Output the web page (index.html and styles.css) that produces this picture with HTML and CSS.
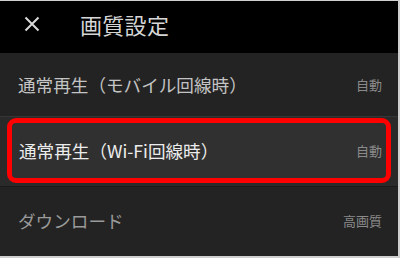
FILE: index.html
```html
<!DOCTYPE html>
<html lang="ja">
<head>
<meta charset="utf-8">
<link rel="stylesheet" href="styles.css">
</head>
<body>
<div class="app">
  <header class="header">
    <svg class="close" width="16" height="16" viewBox="0 0 16 16"><path d="M1.5 1.5 L14.5 14.5 M14.5 1.5 L1.5 14.5" stroke="#d8d8d8" stroke-width="2" fill="none"/></svg>
    <h1 class="title">画質設定</h1>
  </header>
  <div class="row row-first">
    <span class="label">通常再生（モバイル回線時）</span>
    <span class="value">自動</span>
  </div>
  <div class="row-hl">
    <div class="hl-box">
      <span class="label label-strong">通常再生（Wi-Fi回線時）</span>
      <span class="value">自動</span>
    </div>
  </div>
  <div class="row row-last">
    <span class="label label-dim">ダウンロード</span>
    <span class="value">高画質</span>
  </div>
</div>
</body>
</html>
```

FILE: styles.css
```css
html, body {
  margin: 0;
  padding: 0;
}
body {
  background: #cfcfcf;
  width: 400px;
  height: 258px;
  overflow: hidden;
  font-family: "Noto Sans CJK JP", "Noto Sans", sans-serif;
}
.app {
  margin-top: 1px;
  width: 398px;
  height: 255px;
  background: #232323;
  display: flex;
  flex-direction: column;
}
.header {
  height: 52px;
  box-sizing: border-box;
  padding-bottom: 7px;
  background: #000;
  display: flex;
  align-items: center;
  flex-shrink: 0;
}
.close {
  margin-left: 24px;
}
.title {
  margin: 0 0 0 40px;
  font-size: 22px;
  font-weight: normal;
  color: #d6d6d6;
  letter-spacing: 0.3px;
}
.row {
  display: flex;
  align-items: center;
  justify-content: space-between;
  padding: 0 16px 0 18px;
}
.row-first {
  height: 63px;
  border-bottom: 1px solid #363636;
}
.label {
  font-size: 17.6px;
  color: #c4c4c4;
}
.label-strong {
  color: #ececec;
}
.label-dim {
  color: #9a9a9a;
}
.value {
  font-size: 13px;
  color: #8a8a8a;
}
.row-hl {
  height: 70px;
  background: #2a2a2a;
  padding: 1px 7px 0 7px;
  box-sizing: border-box;
  border-bottom: 1px solid #1a1a1a;
}
.hl-box {
  height: 65px;
  box-sizing: border-box;
  border: 5px solid #ff0000;
  border-radius: 9px;
  background: #303030;
  display: flex;
  align-items: center;
  justify-content: space-between;
  padding: 0 4px 0 7px;
}
.row-last {
  flex: 1;
  padding-bottom: 2px;
}
```
